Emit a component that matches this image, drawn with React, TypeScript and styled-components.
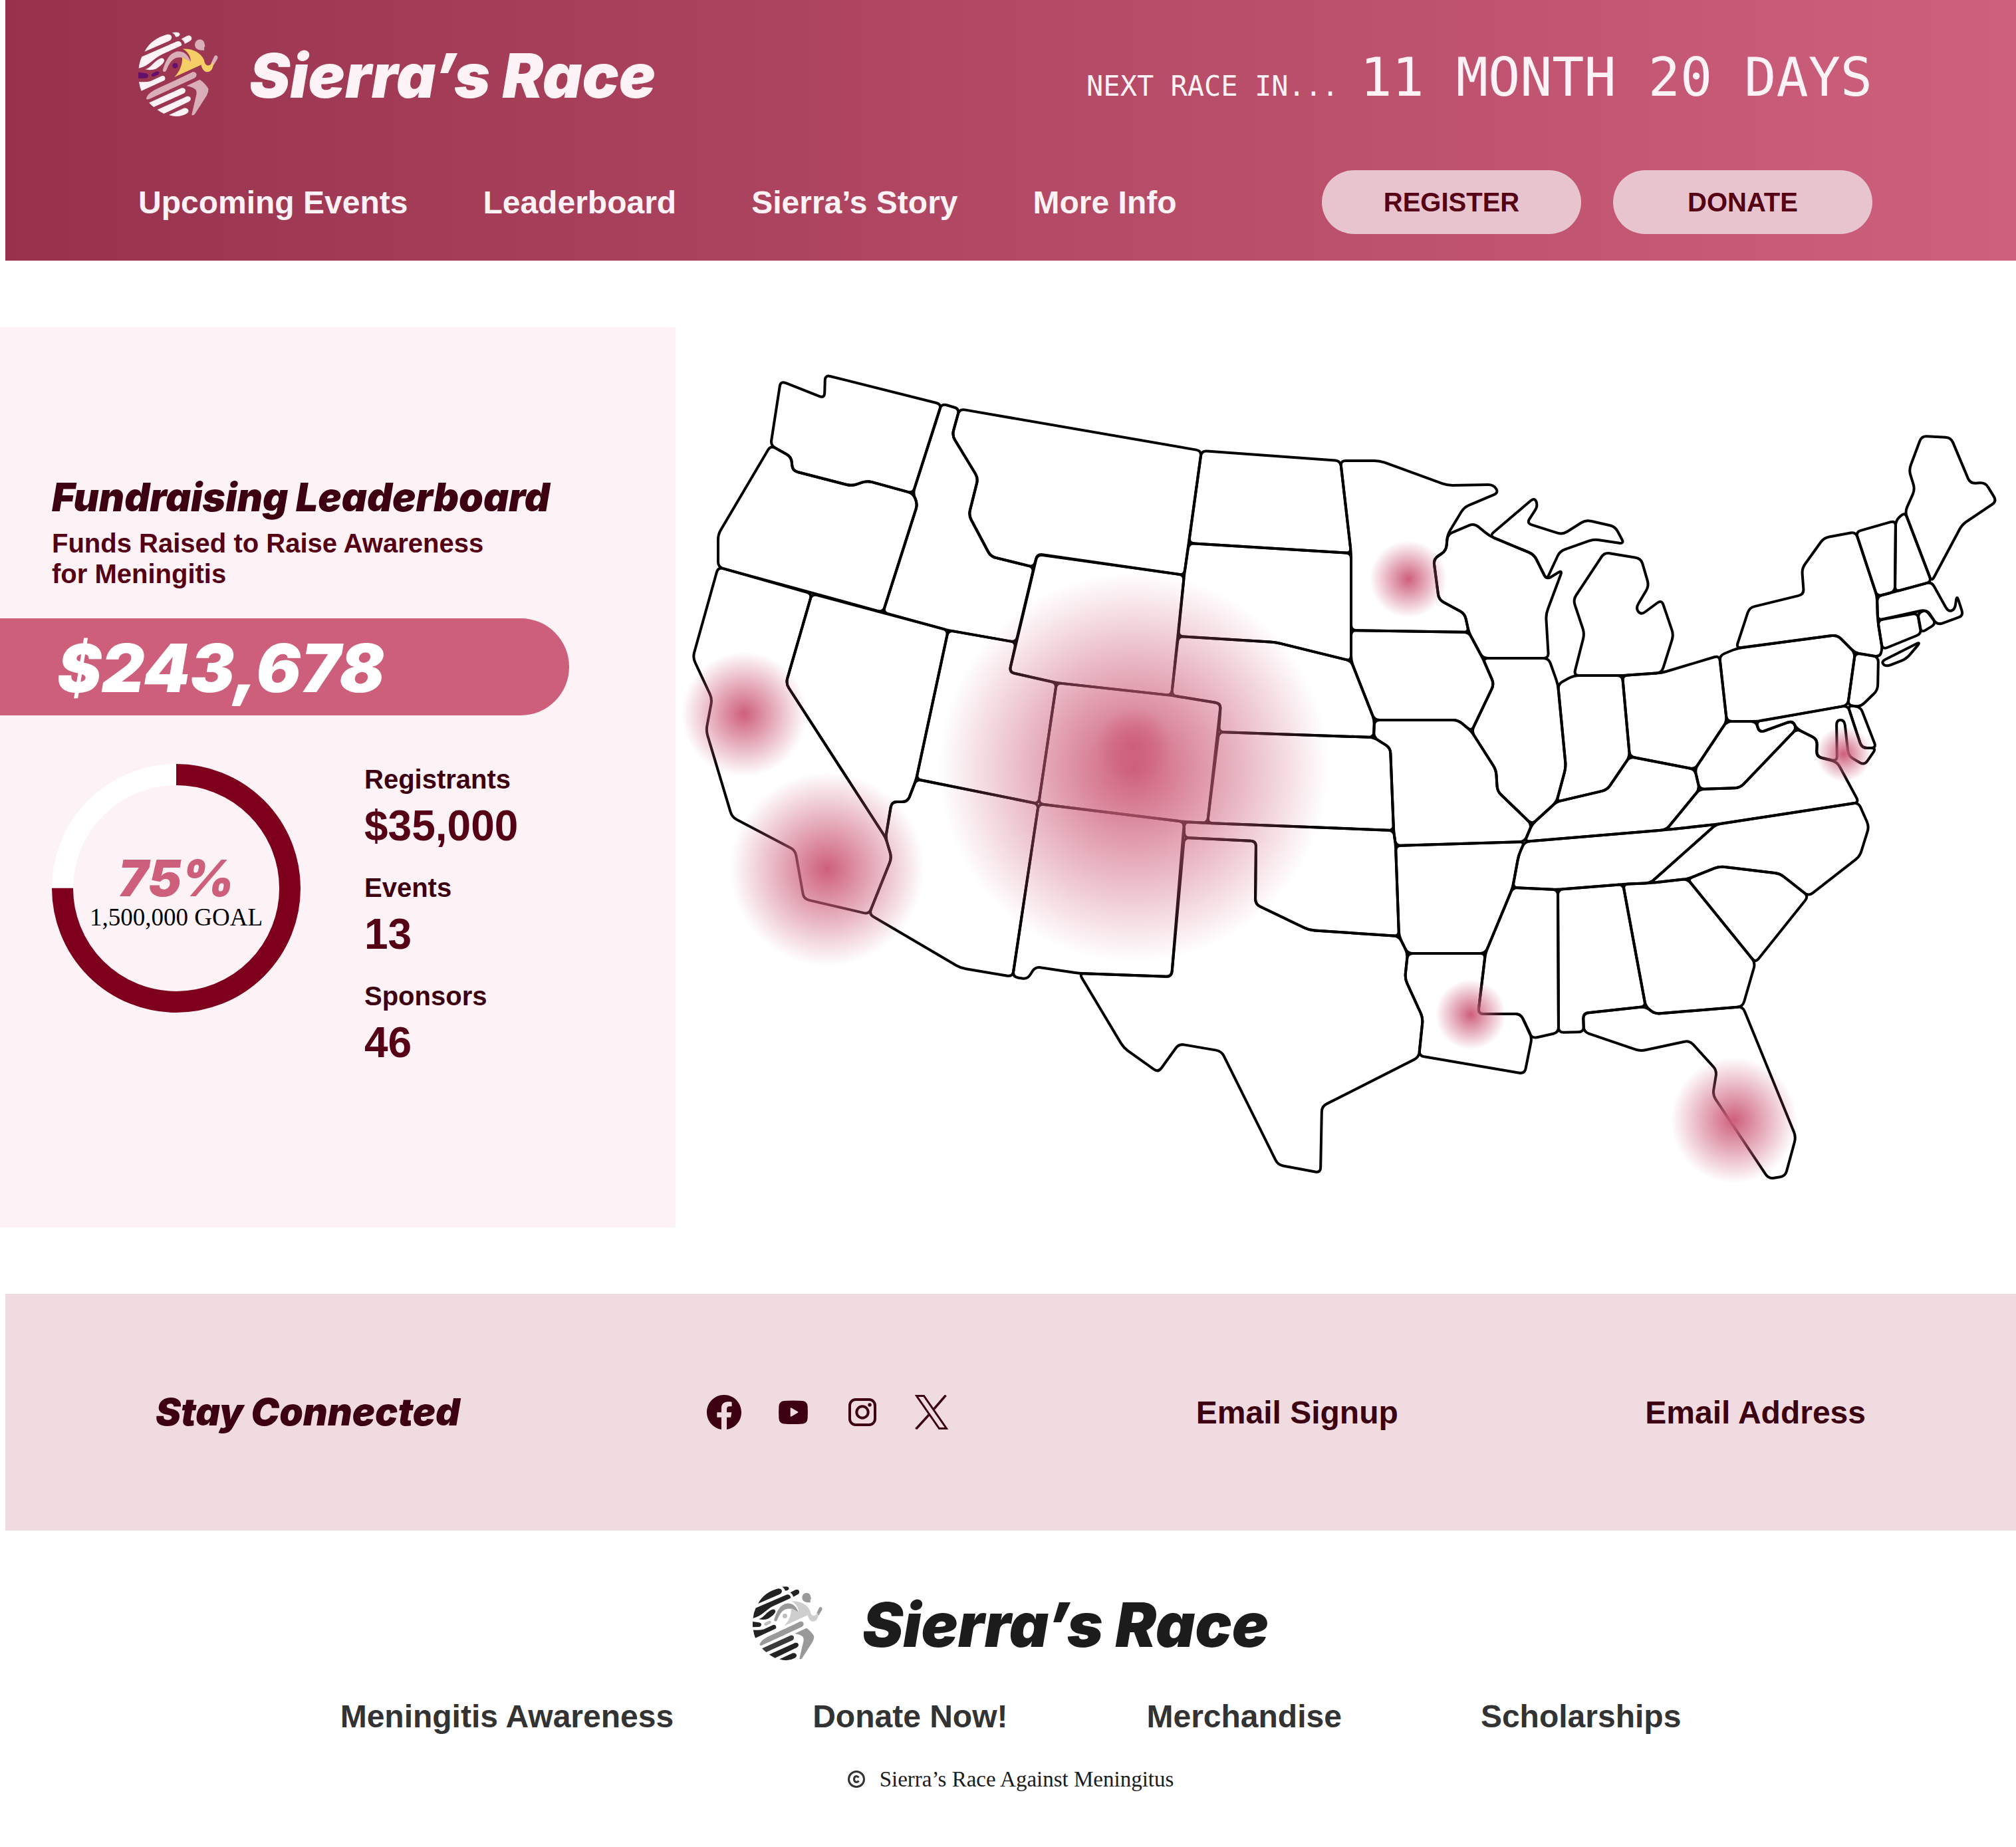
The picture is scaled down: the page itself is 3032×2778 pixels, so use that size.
import React from "react";
import styled, { createGlobalStyle } from "styled-components";
import { BsFacebook } from "react-icons/bs";

const color = {
  wine: "#3d0010",
  maroon: "#550014",
  ring: "#7f001c",
  rose: "#ce5f7b",
  blush: "#fdf2f6",
  petal: "#f0dbe0",
  chip: "#e8c4ce",
  ink: "#1c1c1c",
  slate: "#333333",
};

const sans = `"Liberation Sans", Arial, sans-serif`;
const display = `Inter, "Open Sans", sans-serif`;
const serif = `"Liberation Serif", "Times New Roman", serif`;
const digital = `"DejaVu Sans Mono", monospace`;

const GlobalStyle = createGlobalStyle`
  *, *::before, *::after { box-sizing: border-box; }
  body { margin: 0; background: #ffffff; font-family: ${sans}; }
  h1, h2, p, dl, dd, dt, ul { margin: 0; padding: 0; }
  a { color: inherit; text-decoration: none; }
`;

/* ---------- Brand mark ---------- */

type MarkTone = {
  stripe: string;
  stripeSoft: string;
  body: string;
  shirt: string;
  heel: string;
  patch: string;
  dot: string;
};

const brightTone: MarkTone = {
  stripe: "#fdf2f6",
  stripeSoft: "#fdf2f6",
  body: "#d9aeb9",
  shirt: "#f5cf66",
  heel: "#640f6c",
  patch: "#640f6c",
  dot: "#640f6c",
};

const greyTone: MarkTone = {
  stripe: "#222222",
  stripeSoft: "#3a3a3a",
  body: "#999999",
  shirt: "#cecece",
  heel: "#222222",
  patch: "#bdbdbd",
  dot: "#bdbdbd",
};

const MarkSvg = styled.svg<{ $height: number }>`
  display: block;
  height: ${(p) => p.$height}px;
  width: auto;
  flex: none;
`;

function RunnerMark({ tone, height }: { tone: MarkTone; height: number }) {
  return (
    <MarkSvg $height={height} viewBox="39 38 362 386" aria-hidden="true">
      <g fill={tone.stripe}>
        <path d="M67 128C88 86 125 62 168 50C184 46 195 58 189 69C187 74 183 77 176 80Z" />
        <path d="M192 41Q206 38 220 40Q229 45 227 52Q221 62 208 60Q206 50 192 41Z" />
        <path d="M234 70L260 56Q275 50 280 62Q284 74 272 80L250 92Q246 78 234 70Z" />
        <path d="M55 150L215 81Q232 78 236 95Q237 100 228 103L150 138C110 155 90 192 41 203Q44 173 55 150Z" />
        <path d="M71 208C98 200 110 170 140 158Q155 154 157 168C155 181 137 195 120 205Q98 214 71 208Z" />
        <path d="M42 264Q75 267 95 261L145 238Q158 235 161 247Q162 256 155 259L53 306Q45 288 42 264Z" />
        <path d="M125 391L260 330Q274 328 277 341Q277 350 268 355L155 409Q140 402 125 391Z" />
        <path d="M178 415L245 384Q262 380 267 395Q267 404 258 409Q220 430 178 415Z" />
      </g>
      <path fill={tone.stripeSoft} d="M88 359L236 292Q250 290 253 303Q253 314 244 318L109 379Q98 371 88 359Z" />
      <path fill={tone.heel} d="M39 221L72 225Q84 228 84 236Q82 247 72 248L39 249Z" />
      <path fill={tone.patch} d="M102 227L122 217Q134 214 135 224Q134 230 126 233L110 241Q96 242 99 231Z" />
      <g fill={tone.body}>
        <path d="M285 220Q300 217 303 230Q304 242 295 247L90 342Q77 347 75 340Q80 320 107 305C135 289 205 260 285 220Z" />
        <path d="M318 72Q336 73 339 90L342 103L338 107L338 122L320 121Q297 118 295 97Q297 74 318 72Z" />
        <path d="M238 152L277 172C262 140 248 126 220 126C182 130 165 165 151 208C148 216 153 220 160 219Q164 217 167 210C180 180 192 160 215 155Q228 151 240 156Z" />
        <path d="M384 148Q392 140 399 150Q400 155 398 160L379 192Q378 180 370 178Z" />
        <path d="M257 283L318 254Q342 270 357 296Q358 310 350 325L297 408Q290 419 281 414L303 320Q304 308 300 300Q282 286 257 283Z" />
      </g>
      <path
        fill={tone.shirt}
        d="M240 115C282 112 322 130 337 165C340 182 346 190 356 190C366 190 370 182 373 176L378 178Q380 186 378 194C374 212 364 220 350 220C337 218 328 205 324 187L202 243C226 220 241 185 238 152L277 172C278 150 262 125 240 115Z"
      />
      <circle cx="206" cy="191" r="12" fill={tone.dot} />
    </MarkSvg>
  );
}

const Brand = styled.a`
  display: flex;
  align-items: center;
  gap: 47px;
`;

const Wordmark = styled.span<{ $color: string }>`
  padding-top: 4px;
  font: italic 900 92px/112px ${display};
  color: ${(p) => p.$color};
  white-space: nowrap;
`;

/* ---------- Header ---------- */

const Header = styled.header`
  display: flex;
  flex-direction: column;
  gap: 80px;
  margin-left: 8px;
  padding: 48px 216px 40px 200px;
  background: linear-gradient(90deg, #98324c 0%, #ce607c 100%);
  color: ${color.blush};
`;

const HeaderRow = styled.div`
  display: flex;
  justify-content: space-between;
  align-items: center;
`;

const Countdown = styled.p`
  display: flex;
  align-items: baseline;
  gap: 32px;
  padding-top: 8px;
  font-family: ${digital};
  white-space: pre;
`;

const CountdownLabel = styled.span`
  font-size: 42px;
`;

const CountdownValue = styled.time`
  font-size: 80px;
`;

const MainNav = styled.nav`
  display: flex;
  gap: 113px;
  font-size: 48px;
  font-weight: 700;
  white-space: nowrap;
`;

const Actions = styled.div`
  display: flex;
  gap: 48px;
`;

const PillButton = styled.button`
  width: 390px;
  height: 96px;
  border: 0;
  border-radius: 48px;
  background: ${color.chip};
  color: ${color.maroon};
  font: 700 40px/46px ${sans};
  cursor: pointer;
`;

/* ---------- Leaderboard ---------- */

const Main = styled.main`
  display: grid;
  grid-template-columns: minmax(0, 1016fr) minmax(0, 2016fr);
  margin: 100px 0;
`;

const Panel = styled.section`
  padding: 224px 0 100px;
  background: ${color.blush};
`;

const PanelTitle = styled.h1`
  padding-left: 78px;
  font: italic 900 59px/64px ${display};
  color: ${color.wine};
`;

const PanelLead = styled.p`
  max-width: 760px;
  margin-top: 14px;
  padding-left: 78px;
  font: 700 40px/46px ${sans};
  color: ${color.maroon};
`;

const TotalBar = styled.p`
  display: flex;
  align-items: center;
  width: 856px;
  max-width: 100%;
  height: 146px;
  margin-top: 44px;
  padding: 4px 0 0 86px;
  border-radius: 0 73px 73px 0;
  background: ${color.rose};
  color: #ffffff;
  font: italic 900 100px/120px ${display};
`;

const Breakdown = styled.div`
  display: flex;
  align-items: flex-start;
  gap: 96px;
  margin-top: 73px;
  padding-left: 78px;
`;

const Ring = styled.div`
  display: grid;
  place-items: center;
  width: 374px;
  height: 374px;
  flex: none;
`;

const RingSvg = styled.svg`
  grid-area: 1 / 1;
  width: 100%;
  height: 100%;
`;

const RingText = styled.p`
  grid-area: 1 / 1;
  display: flex;
  flex-direction: column;
  align-items: center;
  padding-top: 4px;
`;

const RingPercent = styled.span`
  font: italic 900 76px/84px ${display};
  color: ${color.rose};
`;

const RingGoal = styled.span`
  font: 400 37px/36px ${serif};
  color: #000000;
`;

const Stats = styled.dl`
  display: grid;
  gap: 33px;
`;

const Stat = styled.div`
  display: grid;
  gap: 10px;
`;

const StatLabel = styled.dt`
  font: 700 40px/46px ${sans};
  color: ${color.wine};
`;

const StatValue = styled.dd`
  font: 700 64px/74px ${sans};
  color: ${color.maroon};
`;

const stats = [
  { label: "Registrants", value: "$35,000" },
  { label: "Events", value: "13" },
  { label: "Sponsors", value: "46" },
];

function GoalRing({ percent }: { percent: number }) {
  const r = 171;
  const length = 2 * Math.PI * r;
  return (
    <Ring>
      <RingSvg viewBox="0 0 374 374" aria-hidden="true">
        <circle cx="187" cy="187" r={r} fill="none" stroke="#ffffff" strokeWidth="32" />
        <circle
          cx="187"
          cy="187"
          r={r}
          fill="none"
          stroke={color.ring}
          strokeWidth="32"
          strokeDasharray={`${(length * percent) / 100} ${length}`}
          transform="rotate(-90 187 187)"
        />
      </RingSvg>
      <RingText>
        <RingPercent>{percent}%</RingPercent>
        <RingGoal>1,500,000 GOAL</RingGoal>
      </RingText>
    </Ring>
  );
}

/* ---------- Map ---------- */

type Point = [number, number];

// Each state is a closed outline, listed as "x,y" pairs.
const states: Record<string, string> = {
  WA: "1174,573 1240,599 1241,564 1416,608 1373,742 1304,723 1281,731 1192,708 1190,687 1159,670",
  OR: "1159,670 1080,804 1080,853 1328,921 1380,758 1373,742 1304,723 1281,731 1192,708 1190,687",
  ID: "1416,607 1443,615 1432,655 1471,719 1457,775 1490,837 1555,853 1528,966 1426,948 1328,921 1380,758 1373,742",
  MT: "1443,615 1807,678 1781,865 1560,833 1555,853 1490,837 1457,775 1471,719 1432,655",
  WY: "1560,834 1781,865 1762,1046 1589,1027 1518,1011",
  UT: "1426,948 1528,966 1518,1011 1589,1027 1562,1209 1378,1172",
  NV: "1221,893 1426,948 1378,1172 1365,1206 1341,1206 1332,1260 1182,1028",
  CA: "1080,853 1221,893 1182,1028 1332,1260 1341,1290 1307,1375 1209,1352 1196,1279 1101,1229 1062,1099 1071,1051 1042,989",
  AZ: "1378,1172 1562,1209 1523,1469 1445,1456 1307,1375 1341,1290 1332,1260 1341,1206 1365,1206",
  NM: "1562,1209 1781,1236 1762,1469 1623,1464 1557,1454 1545,1473 1523,1469",
  CO: "1589,1027 1762,1046 1836,1058 1816,1238 1781,1236 1562,1209",
  ND: "1807,678 2016,693 2032,832 1788,817",
  SD: "1788,817 2032,832 2032,994 1918,966 1772,957 1781,865",
  NE: "1772,957 1918,966 2032,994 2067,1083 2066,1109 1833,1101 1836,1058 1762,1046",
  KS: "1833,1101 2066,1109 2091,1125 2096,1249 1816,1238",
  OK: "1781,1236 1816,1238 2096,1249 2099,1272 2104,1408 1969,1399 1888,1360 1889,1265 1781,1260",
  TX: "1623,1464 1690,1576 1742,1613 1773,1570 1837,1581 1922,1752 1986,1764 1988,1664 2134,1590 2140,1531 2113,1472 2117,1434 2104,1408 1969,1399 1888,1360 1889,1265 1781,1260 1762,1469",
  MN: "2016,693 2075,693 2177,730 2246,729 2254,741 2202,763 2177,804 2175,828 2156,841 2164,902 2203,923 2209,951 2032,948 2032,832",
  IA: "2032,948 2209,951 2230,990 2247,1029 2213,1100 2193,1083 2067,1083 2032,994",
  MO: "2067,1083 2193,1083 2213,1100 2250,1158 2252,1190 2304,1240 2293,1266 2099,1272 2096,1249 2091,1125 2066,1109",
  AR: "2099,1272 2293,1266 2284,1286 2275,1335 2234,1434 2117,1434 2104,1408",
  LA: "2117,1434 2234,1434 2223,1525 2287,1525 2304,1560 2293,1615 2134,1588 2140,1531 2113,1472",
  WI: "2177,804 2217,787 2240,806 2307,834 2326,872 2350,857 2325,924 2329,990 2230,990 2209,951 2203,923 2164,902 2156,841 2175,828",
  UP: "2240,806 2308,748 2313,761 2296,787 2350,804 2385,782 2429,792 2443,818 2397,811 2346,829 2326,872 2307,834",
  MI: "2367,1016 2383,953 2366,902 2413,831 2468,840 2480,881 2460,915 2468,925 2499,902 2517,955 2499,1012 2440,1016",
  IL: "2230,990 2329,990 2343,1029 2355,1154 2341,1206 2304,1240 2252,1190 2250,1158 2213,1100 2247,1029",
  IN: "2343,1029 2367,1016 2440,1016 2451,1138 2417,1188 2341,1206 2355,1154",
  OH: "2440,1016 2499,1012 2586,986 2597,1085 2549,1157 2451,1138",
  PA: "2586,986 2613,975 2763,955 2790,982 2779,1061 2644,1085 2597,1085",
  NY: "2611,975 2631,914 2713,894 2710,855 2743,809 2791,800 2823,897 2824,933 2831,976 2827,988 2790,982 2763,955",
  LI: "2829,995 2889,965 2867,991 2836,1003",
  NJ: "2790,982 2825,988 2824,1038 2798,1063 2779,1061",
  VT: "2791,800 2851,783 2850,890 2823,897",
  NH: "2851,783 2865,770 2905,875 2850,890",
  ME: "2865,770 2880,736 2871,707 2890,656 2934,658 2963,727 2986,726 3003,754 2951,789 2905,875",
  MA: "2905,875 2930,920 2940,917 2943,895 2953,926 2914,940 2896,917 2824,933 2823,897 2850,890",
  CT: "2824,933 2884,922 2890,953 2831,977",
  RI: "2884,922 2898,917 2912,938 2889,952",
  DE: "2779,1061 2798,1063 2822,1125 2800,1125",
  MD: "2779,1061 2800,1125 2822,1125 2804,1151 2780,1137 2774,1083 2762,1083 2763,1145 2732,1138 2733,1112 2702,1096 2696,1084 2646,1102 2641,1085",
  WV: "2597,1085 2641,1085 2646,1102 2696,1084 2702,1096 2617,1185 2556,1187 2549,1157",
  VA: "2702,1096 2733,1112 2732,1138 2763,1146 2796,1207 2581,1240 2506,1248 2556,1187 2617,1185",
  KY: "2341,1206 2417,1188 2451,1138 2549,1157 2556,1187 2506,1248 2293,1266 2304,1240",
  TN: "2293,1266 2506,1248 2581,1240 2482,1328 2441,1330 2343,1338 2275,1335 2284,1286",
  NC: "2581,1240 2795,1207 2811,1243 2797,1288 2720,1348 2677,1314 2586,1303 2538,1322 2482,1328",
  SC: "2538,1322 2586,1303 2677,1314 2720,1348 2640,1448",
  MS: "2275,1335 2343,1338 2344,1553 2304,1562 2287,1525 2223,1525 2234,1434",
  AL: "2343,1338 2441,1330 2475,1514 2381,1524 2382,1552 2344,1553",
  GA: "2441,1330 2482,1328 2538,1322 2640,1448 2621,1514 2489,1525 2475,1514",
  FL: "2475,1514 2489,1525 2621,1514 2701,1710 2685,1769 2660,1773 2576,1647 2582,1610 2541,1565 2467,1581 2382,1552 2381,1524",
};

const hotspots = [
  { place: "Northern California", x: 1119, y: 1074, r: 94 },
  { place: "Southern California", x: 1244, y: 1307, r: 146 },
  { place: "Mountain West", x: 1705, y: 1154, r: 293 },
  { place: "Denver", x: 1705, y: 1122, r: 57 },
  { place: "Minneapolis", x: 2118, y: 871, r: 58 },
  { place: "Washington", x: 2773, y: 1134, r: 42 },
  { place: "New Orleans", x: 2212, y: 1526, r: 53 },
  { place: "Florida", x: 2608, y: 1685, r: 95 },
];

function roundedOutline(source: string, radius: number) {
  const pts = source.split(" ").map((p) => p.split(",").map(Number) as Point);
  const toward = (a: Point, b: Point): Point => {
    const dist = Math.hypot(b[0] - a[0], b[1] - a[1]);
    const t = Math.min(radius, dist / 2) / dist;
    return [a[0] + (b[0] - a[0]) * t, a[1] + (b[1] - a[1]) * t];
  };
  const parts = pts.map((p, i) => {
    const start = toward(p, pts[(i + pts.length - 1) % pts.length]);
    const end = toward(p, pts[(i + 1) % pts.length]);
    return `${i === 0 ? "M" : "L"}${start} Q${p} ${end}`;
  });
  return parts.join(" ") + "Z";
}

const MapFigure = styled.figure`
  margin: 0;
`;

const MapSvg = styled.svg`
  display: block;
  width: 100%;
  height: auto;
`;

function FundingMap() {
  return (
    <MapFigure>
      <MapSvg viewBox="1016 492 2016 1354" role="img" aria-label="Map of funds raised across the United States">
        <defs>
          <radialGradient id="heat">
            <stop offset="0" stopColor={color.rose} />
            <stop offset="1" stopColor={color.rose} stopOpacity="0" />
          </radialGradient>
        </defs>
        <g fill="none" stroke="#000000" strokeWidth="4" strokeLinejoin="round">
          {Object.entries(states).map(([code, outline]) => (
            <path key={code} d={roundedOutline(outline, 8)} />
          ))}
        </g>
        {hotspots.map((spot) => (
          <circle key={spot.place} cx={spot.x} cy={spot.y} r={spot.r} fill="url(#heat)" />
        ))}
      </MapSvg>
    </MapFigure>
  );
}

/* ---------- Stay connected ---------- */

const ConnectBand = styled.section`
  display: flex;
  justify-content: space-between;
  align-items: center;
  min-height: 356px;
  margin-left: 8px;
  padding: 0 226px;
  background: ${color.petal};
  color: ${color.wine};
  font-size: 48px;
  font-weight: 700;
`;

const ConnectTitle = styled.h2`
  font: italic 900 57px/64px ${display};
`;

const SocialList = styled.div`
  display: flex;
  gap: 52px;
`;

const SocialLink = styled.a`
  display: block;
  width: 52px;
  height: 52px;

  svg {
    display: block;
    width: 100%;
    height: 100%;
  }
`;

function YoutubeIcon() {
  return (
    <svg viewBox="0 0 52 52" aria-hidden="true">
      <path
        fill="currentColor"
        fillRule="evenodd"
        d="M26 8.500Q35 8.500 40 9Q47 9.800 47.600 17Q48.200 26 47.600 35.500Q47 42.700 40 43.500Q26 44.500 12 43.500Q5 42.700 4.400 35.500Q3.800 26 4.400 17Q5 9.800 12 9Q17 8.500 26 8.500ZM21.700 20.200V31.800Q22 33 23.200 32.500L33 26.800Q33.800 26 33 25.200L23.200 19.500Q22 19 21.700 20.200Z"
      />
    </svg>
  );
}

function InstagramIcon() {
  return (
    <svg viewBox="0 0 52 52" fill="none" stroke="currentColor" strokeWidth="4" aria-hidden="true">
      <rect x="7" y="7" width="38" height="38" rx="9" />
      <circle cx="26" cy="26" r="8.700" />
      <circle cx="37" cy="15" r="2.700" fill="currentColor" stroke="none" />
    </svg>
  );
}

function XIcon() {
  return (
    <svg viewBox="0 0 52 52" fill="none" stroke="currentColor" strokeWidth="3" aria-hidden="true">
      <path d="M3.500 1.500H14.500L48.500 50.500H37.500Z" />
      <path d="M47.500 0.500L29 22M22 30L2.500 51.500" strokeWidth="3.500" />
    </svg>
  );
}

/* ---------- Footer ---------- */

const Footer = styled.footer`
  display: flex;
  flex-direction: column;
  align-items: center;
  margin-left: 8px;
  padding: 82px 0 80px;
  color: ${color.slate};
`;

const FooterBrand = styled(Brand)`
  gap: 60px;
`;

const FooterNav = styled.nav`
  display: flex;
  gap: 209px;
  margin-top: 54px;
  font: 700 48px/56px ${sans};
  white-space: nowrap;
`;

const Copyright = styled.p`
  display: flex;
  align-items: center;
  gap: 22px;
  margin-top: 46px;
  font: 400 33px/40px ${serif};
  color: ${color.ink};

  svg {
    width: 26px;
    height: 26px;
  }
`;

const navLinks = ["Upcoming Events", "Leaderboard", "Sierra’s Story", "More Info"];
const footerLinks = ["Meningitis Awareness", "Donate Now!", "Merchandise", "Scholarships"];

export default function App() {
  return (
    <>
      <GlobalStyle />
      <Header>
        <HeaderRow>
          <Brand href="#home">
            <RunnerMark tone={brightTone} height={128} />
            <Wordmark $color={color.blush}>Sierra’s Race</Wordmark>
          </Brand>
          <Countdown>
            <CountdownLabel>NEXT RACE IN...</CountdownLabel>
            <CountdownValue>11 MONTH 20 DAYS</CountdownValue>
          </Countdown>
        </HeaderRow>
        <HeaderRow>
          <MainNav aria-label="Main">
            {navLinks.map((label) => (
              <a key={label} href="#main">
                {label}
              </a>
            ))}
          </MainNav>
          <Actions>
            <PillButton type="button">REGISTER</PillButton>
            <PillButton type="button">DONATE</PillButton>
          </Actions>
        </HeaderRow>
      </Header>

      <Main id="main">
        <Panel>
          <PanelTitle>Fundraising Leaderboard</PanelTitle>
          <PanelLead>Funds Raised to Raise Awareness for Meningitis</PanelLead>
          <TotalBar>$243,678</TotalBar>
          <Breakdown>
            <GoalRing percent={75} />
            <Stats>
              {stats.map((stat) => (
                <Stat key={stat.label}>
                  <StatLabel>{stat.label}</StatLabel>
                  <StatValue>{stat.value}</StatValue>
                </Stat>
              ))}
            </Stats>
          </Breakdown>
        </Panel>
        <FundingMap />
      </Main>

      <ConnectBand>
        <ConnectTitle>Stay Connected</ConnectTitle>
        <SocialList>
          <SocialLink href="#facebook" aria-label="Facebook">
            <BsFacebook />
          </SocialLink>
          <SocialLink href="#youtube" aria-label="YouTube">
            <YoutubeIcon />
          </SocialLink>
          <SocialLink href="#instagram" aria-label="Instagram">
            <InstagramIcon />
          </SocialLink>
          <SocialLink href="#x" aria-label="X">
            <XIcon />
          </SocialLink>
        </SocialList>
        <a href="#signup">Email Signup</a>
        <a href="#address">Email Address</a>
      </ConnectBand>

      <Footer>
        <FooterBrand href="#home">
          <RunnerMark tone={greyTone} height={112} />
          <Wordmark $color={color.ink}>Sierra’s Race</Wordmark>
        </FooterBrand>
        <FooterNav aria-label="Footer">
          {footerLinks.map((label) => (
            <a key={label} href="#main">
              {label}
            </a>
          ))}
        </FooterNav>
        <Copyright>
          <svg viewBox="0 0 26 26" fill="none" stroke={color.slate} strokeWidth="3" aria-hidden="true">
            <circle cx="13" cy="13" r="11.500" />
            <path d="M16.500 10.500Q15 8.500 13 8.500Q9.500 8.800 9.500 13Q9.500 17.200 13 17.500Q15 17.500 16.500 15.500" />
          </svg>
          Sierra’s Race Against Meningitus
        </Copyright>
      </Footer>
    </>
  );
}
